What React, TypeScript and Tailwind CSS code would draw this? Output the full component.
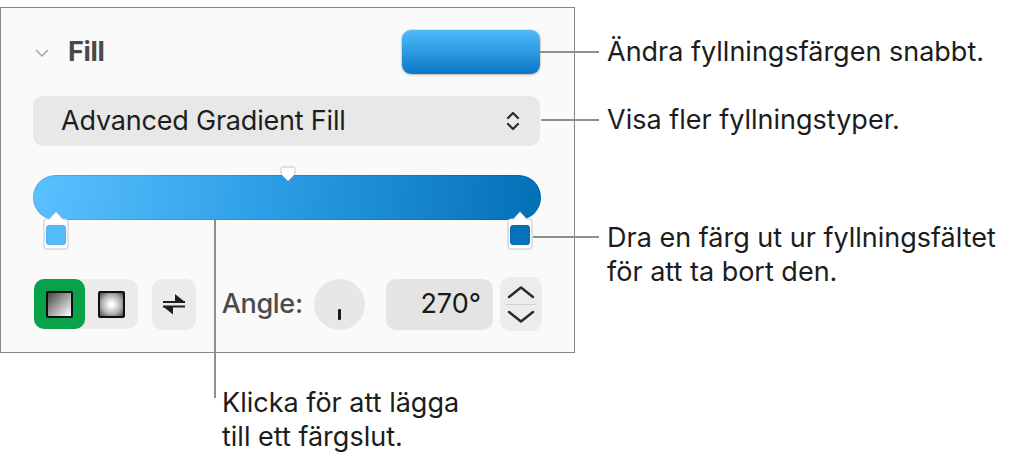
import React from "react";

function StopMarker({ color }: { color: string }) {
  return (
    <svg width="26" height="39" viewBox="0 0 26 39">
      <path
        d="M13 0.8 L19.5 8 H22.5 a2.5 2.5 0 0 1 2.5 2.5 V35.5 a2.5 2.5 0 0 1 -2.5 2.5 H3.5 a2.5 2.5 0 0 1 -2.5 -2.5 V10.5 a2.5 2.5 0 0 1 2.5 -2.5 H6.5 Z"
        fill="#ffffff"
        stroke="#c4c4c4"
        strokeWidth="1"
      />
      <rect x="3" y="14" width="20" height="20" rx="3.5" fill={color} stroke="#0000001f" strokeWidth="0.6" />
    </svg>
  );
}

function SwapIcon() {
  return (
    <svg width="24" height="24" viewBox="0 0 24 24">
      <line x1="1" y1="10" x2="23" y2="10" stroke="#1f1f1f" strokeWidth="2" />
      <polygon points="13,2 23,10 13,10" fill="#1f1f1f" />
      <line x1="1" y1="14.5" x2="23" y2="14.5" stroke="#1f1f1f" strokeWidth="2" />
      <polygon points="11,14.5 1,14.5 11,22.5" fill="#1f1f1f" />
    </svg>
  );
}

export default function App() {
  return (
    <div className="relative w-[1013px] h-[458px] bg-white flex flex-col font-['Inter','Noto_Sans',sans-serif] text-[#1c1c1c]">
      {/* Panel + right callouts */}
      <div className="flex pt-[7px]">
        <div className="w-[575px] h-[346px] border border-[#888888] bg-[#fafafa] flex flex-col px-[32px]">
          {/* Header */}
          <div className="mt-[22px] h-[44px] flex items-center">
            <svg width="14" height="9" viewBox="0 0 14 9" className="ml-[2px] mt-[3px]">
              <path d="M1.5 1.5 L7 7 L12.5 1.5" fill="none" stroke="#a8a8a8" strokeWidth="1.6" strokeLinecap="round" strokeLinejoin="round" />
            </svg>
            <span className="ml-[19px] text-[27px] font-bold tracking-[-0.3px] text-[#4a4a4a]">Fill</span>
            <div className="ml-auto mr-[2px] w-[138px] h-[44px] rounded-[9px] bg-[linear-gradient(180deg,#50baf9,#0a78c6)] shadow-[0_0_0_1px_#00000014,0_1px_3px_#00000033]" />
          </div>

          {/* Fill type dropdown */}
          <div className="mt-[22px] h-[50px] w-[507px] rounded-[10px] bg-[#e8e8e8] flex items-center pl-[28px] pr-[19px]">
            <span className="text-[27px] tracking-[-0.2px] text-[#1e1e1e]">Advanced Gradient Fill</span>
            <svg width="16" height="24" viewBox="0 0 16 24" className="ml-auto">
              <path d="M3 9 L8 4 L13 9" fill="none" stroke="#2b2b2b" strokeWidth="2.2" strokeLinecap="round" strokeLinejoin="round" />
              <path d="M3 15 L8 20 L13 15" fill="none" stroke="#2b2b2b" strokeWidth="2.2" strokeLinecap="round" strokeLinejoin="round" />
            </svg>
          </div>

          {/* Gradient bar */}
          <div className="mt-[29px] relative h-[45px] w-[508px] rounded-full bg-[linear-gradient(95deg,#5bc1ff,#2e9fe6_45%,#0270b7)] shadow-[inset_0_0_0_1px_#0000001a]">
            <svg width="16" height="16" viewBox="0 0 16 16" className="absolute left-[247px] top-[-9px]">
              <path d="M2.5 1 H13.5 a1.5 1.5 0 0 1 1.5 1.5 V8 L8 15 L1 8 V2.5 a1.5 1.5 0 0 1 1.5 -1.5 Z" fill="#ffffff" stroke="#c4c4c4" strokeWidth="1" />
            </svg>
            <div className="absolute left-[10px] top-[36px]">
              <StopMarker color="#54bbfb" />
            </div>
            <div className="absolute left-[474px] top-[36px]">
              <StopMarker color="#0672ba" />
            </div>
          </div>

          {/* Bottom controls */}
          <div className="mt-[56px] h-[56px] flex items-center">
            <div className="ml-[1px] w-[104px] h-[50px] rounded-[10px] bg-[#ebebeb] flex items-center">
              <div className="w-[51px] h-[50px] rounded-[10px] bg-[#0aa14b] flex items-center justify-center">
                <div className="w-[27px] h-[27px] border-2 border-[#111] rounded-[2px] bg-[linear-gradient(135deg,#444,#9a9a9a_45%,#ffffff)]" />
              </div>
              <div className="flex-1 flex items-center justify-center">
                <div className="w-[27px] h-[27px] border-2 border-[#111] rounded-[2px] bg-[radial-gradient(circle,#ffffff_10%,#b0b0b0_60%,#4a4a4a)]" />
              </div>
            </div>
            <div className="ml-[14px] w-[44px] h-[51px] rounded-[10px] bg-[#ebebeb] flex items-center justify-center">
              <SwapIcon />
            </div>
            <span className="ml-[26px] w-[83px] text-[27px] font-medium tracking-[-0.3px] text-[#4b4b4b] whitespace-nowrap">Angle:</span>
            <div className="ml-[10px] w-[51px] h-[51px] rounded-full bg-[#e7e7e7] flex flex-col items-center justify-end pb-[10px]">
              <div className="w-[3px] h-[11px] rounded-[1px] bg-[#1a1a1a]" />
            </div>
            <div className="ml-[21px] w-[107px] h-[51px] rounded-[10px] bg-[#e4e4e4] flex items-center justify-end pr-[12px]">
              <span className="text-[27px] text-[#1a1a1a]">270°</span>
            </div>
            <div className="ml-[7px] w-[42px] h-[54px] rounded-[10px] bg-[#ececec] flex flex-col items-center justify-center">
              <svg width="30" height="16" viewBox="0 0 30 16">
                <path d="M3 13 L15 3.5 L27 13" fill="none" stroke="#2a2a2a" strokeWidth="2.4" strokeLinecap="round" strokeLinejoin="round" />
              </svg>
              <div className="w-[30px] h-[1px] bg-[#d2d2d2] my-[4px]" />
              <svg width="30" height="16" viewBox="0 0 30 16">
                <path d="M3 3 L15 12.5 L27 3" fill="none" stroke="#2a2a2a" strokeWidth="2.4" strokeLinecap="round" strokeLinejoin="round" />
              </svg>
            </div>
          </div>
        </div>

        {/* Right callouts */}
        <div className="flex flex-col pl-[32px] text-[27px] leading-[34px] whitespace-nowrap">
          <p className="mt-[28px]">Ändra fyllningsfärgen snabbt.</p>
          <p className="mt-[34px]">Visa fler fyllningstyper.</p>
          <p className="mt-[84px]">
            Dra en färg ut ur fyllningsfältet
            <br />
            för att ta bort den.
          </p>
        </div>
      </div>

      {/* Bottom callout */}
      <p className="ml-[222px] mt-[33px] text-[27px] leading-[34px]">
        Klicka för att lägga
        <br />
        till ett färgslut.
      </p>

      {/* Callout leader lines */}
      <div className="absolute left-[540px] top-[51px] w-[59px] h-[2px] bg-[#8f8f8f]" />
      <div className="absolute left-[541px] top-[119px] w-[58px] h-[2px] bg-[#8f8f8f]" />
      <div className="absolute left-[533px] top-[236px] w-[66px] h-[2px] bg-[#8f8f8f]" />
      <div className="absolute left-[214px] top-[220px] w-[2px] h-[178px] bg-[#8f8f8f]" />
    </div>
  );
}
